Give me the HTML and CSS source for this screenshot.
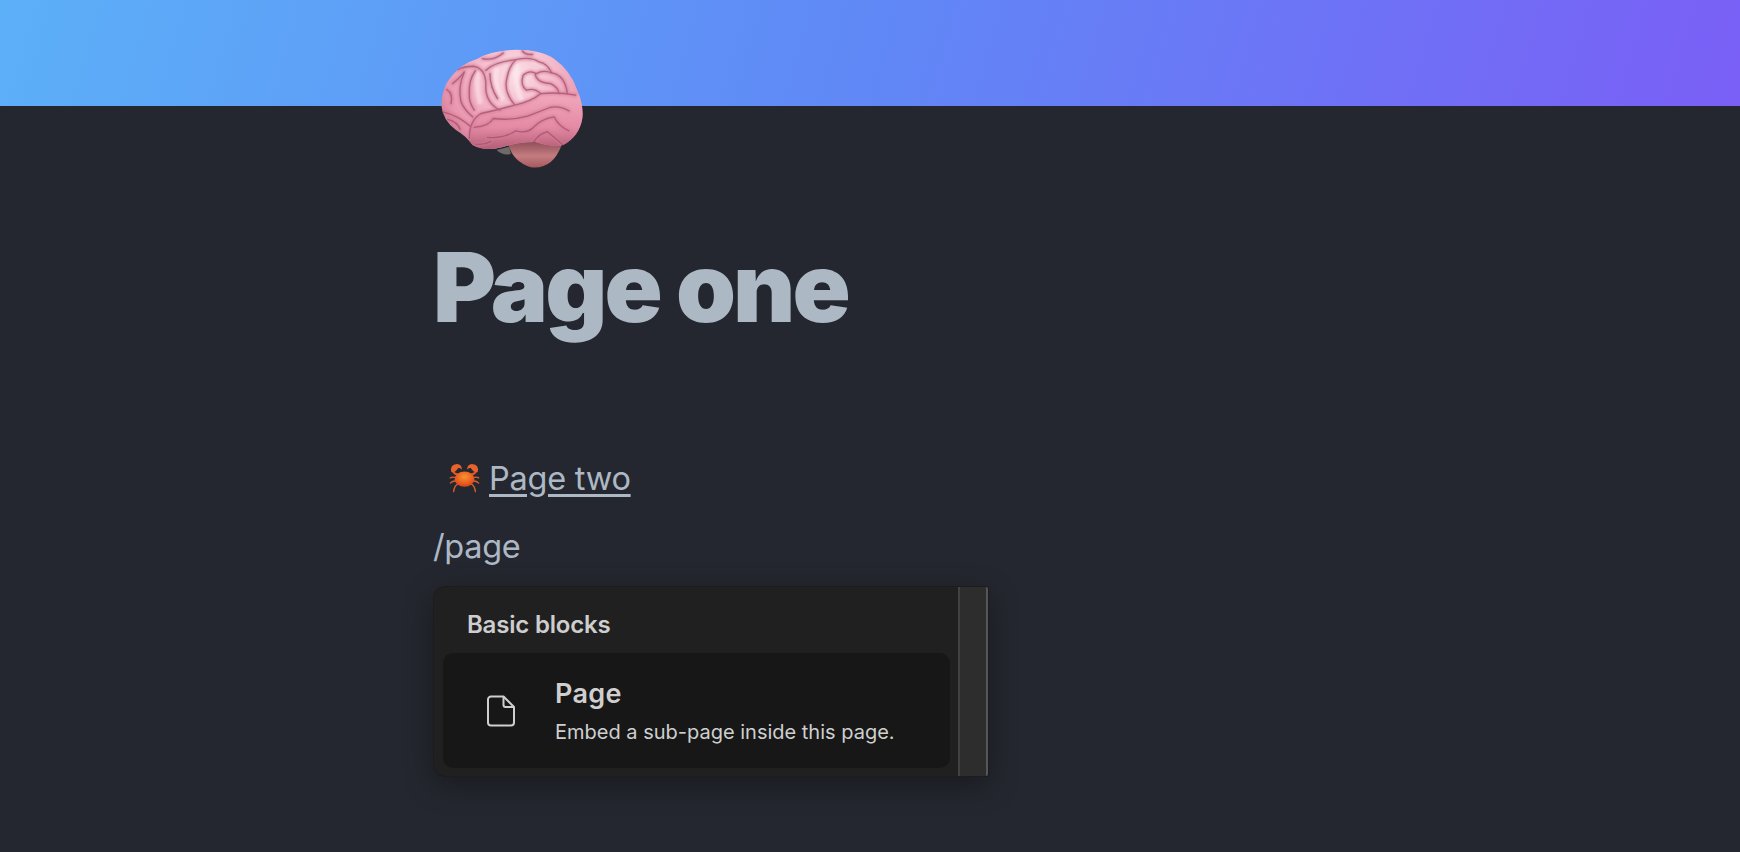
FILE: index.html
```html
<!DOCTYPE html>
<html lang="en">
<head>
    <meta charset="UTF-8">
    <meta name="viewport" content="width=device-width, initial-scale=1.0">
    <title>Page one</title>
    <link rel="stylesheet" href="styles.css">
</head>
<body>

<!-- Cover -->
<header class="cover"></header>

<main class="page">
    <!-- Page icon hangs over the cover -->
    <div class="page-icon">
        <svg viewBox="60 50 440 370" width="147" height="123" aria-hidden="true">
            <defs>
                <radialGradient id="brainFill" gradientUnits="userSpaceOnUse" cx="290" cy="130" r="270">
                    <stop offset="0" stop-color="#fbdfe7"/>
                    <stop offset="0.4" stop-color="#f5bccd"/>
                    <stop offset="0.8" stop-color="#e995ae"/>
                    <stop offset="1" stop-color="#c8728c"/>
                </radialGradient>
                <linearGradient id="lobeFill" gradientUnits="userSpaceOnUse" x1="300" y1="190" x2="300" y2="360">
                    <stop offset="0" stop-color="#f1a8bd"/>
                    <stop offset="0.6" stop-color="#e48aa4"/>
                    <stop offset="1" stop-color="#b25b75"/>
                </linearGradient>
                <linearGradient id="stemFill" x1="0" y1="0" x2="0" y2="1">
                    <stop offset="0" stop-color="#8f4f58"/>
                    <stop offset="0.55" stop-color="#c47c80"/>
                    <stop offset="1" stop-color="#a5595f"/>
                </linearGradient>
                <filter id="soft" x="-10%" y="-10%" width="120%" height="120%"><feGaussianBlur stdDeviation="3.500"/></filter>
                <filter id="softer" x="-10%" y="-10%" width="120%" height="120%"><feGaussianBlur stdDeviation="1.800"/></filter>
                <clipPath id="brainClip">
                    <path d="M66 225 Q68 170 95 140 Q125 100 175 85 Q215 62 290 58 Q365 58 405 85 Q455 120 475 180 Q495 230 490 265 Q480 320 432 345 Q395 352 350 336 Q300 335 245 352 Q195 365 160 345 Q140 318 110 300 Q70 270 66 225 Z"/>
                </clipPath>
                <g id="brainFolds">
                    <path d="M150 325 Q150 270 185 250 Q235 240 285 225 Q335 215 365 190 Q420 185 470 195"/>
                    <path d="M115 118 Q135 108 165 108 Q198 115 200 160 Q195 215 242 240"/>
                    <path d="M168 122 Q148 150 150 190 Q148 215 165 240 M100 160 Q125 140 135 125 Q115 170 125 215 Q135 240 160 260"/>
                    <path d="M200 120 Q225 95 290 88 Q268 110 262 150 Q255 185 285 222"/>
                    <path d="M212 130 Q212 170 235 205"/>
                    <path d="M290 88 Q335 78 360 95 Q385 100 398 128 Q372 118 352 130 Q330 118 312 135 Q302 165 322 180 Q345 172 365 190"/>
                    <path d="M348 130 Q352 158 395 160 Q418 172 420 190"/>
                    <path d="M398 128 Q438 135 445 190"/>
                    <path d="M190 85 Q225 92 252 68 M310 62 Q320 75 340 72"/>
                    <path d="M82 178 Q102 190 95 220 M70 245 Q115 255 152 288"/>
                    <path d="M85 268 Q115 275 122 298"/>
                    <path d="M165 292 Q210 288 222 265 Q275 272 325 258 Q360 245 392 232 Q420 225 450 242"/>
                    <path d="M205 322 Q255 326 290 302 Q325 312 345 290 Q370 265 405 260 Q420 290 450 302"/>
                    <path d="M340 340 Q360 310 385 305 Q410 325 432 345"/>
                    <path d="M170 342 Q195 346 215 334"/>
                </g>
            </defs>
            <path fill="#6d6a68" d="M232 360 Q250 378 275 372 L270 350 Z"/>
            <path fill="url(#stemFill)" d="M268 345 Q282 395 335 412 Q400 420 428 345 Q350 325 268 345 Z"/>
            <path fill="url(#brainFill)" d="M66 225 Q68 170 95 140 Q125 100 175 85 Q215 62 290 58 Q365 58 405 85 Q455 120 475 180 Q495 230 490 265 Q480 320 432 345 Q395 352 350 336 Q300 335 245 352 Q195 365 160 345 Q140 318 110 300 Q70 270 66 225 Z"/>
            <g clip-path="url(#brainClip)">
                <path fill="url(#lobeFill)" d="M150 325 Q150 270 185 250 Q235 240 285 225 Q335 215 365 190 Q420 185 500 195 L500 370 L140 370 Z"/>
                <!-- pale tops of the folds -->
                <g fill="none" stroke="#fdeef3" stroke-width="16" stroke-linecap="round" opacity="0.5" filter="url(#soft)">
                    <path d="M232 118 Q222 160 248 205"/>
                    <path d="M295 110 Q282 150 305 205"/>
                    <path d="M345 92 Q375 105 385 110"/>
                    <path d="M175 130 Q170 170 182 215"/>
                </g>
                <use href="#brainFolds" fill="none" stroke="#cf7a95" stroke-width="12" stroke-linecap="round" stroke-linejoin="round" opacity="0.6" filter="url(#soft)"/>
                <use href="#brainFolds" fill="none" stroke="#a54d69" stroke-width="4" stroke-linecap="round" stroke-linejoin="round" opacity="0.7" filter="url(#softer)"/>
            </g>
        </svg>
    </div>

    <h1 class="page-title">Page one</h1>

    <a class="page-link" href="#">
        <svg class="crab" viewBox="85 62 100 100" width="33" height="33" aria-hidden="true">
            <defs>
                <radialGradient id="crabFill" cx="0.5" cy="0.35" r="0.7">
                    <stop offset="0" stop-color="#f8922e"/>
                    <stop offset="0.65" stop-color="#e8591f"/>
                    <stop offset="1" stop-color="#c93f1a"/>
                </radialGradient>
            </defs>
            <g fill="none" stroke="#d9602e" stroke-width="4" stroke-linecap="round">
                <path d="M112 110 Q98 106 92 110"/>
                <path d="M110 120 Q100 118 92 126"/>
                <path d="M114 129 Q104 134 102 152"/>
                <path d="M158 110 Q172 106 178 110"/>
                <path d="M160 120 Q170 118 178 126"/>
                <path d="M156 129 Q166 134 168 152"/>
            </g>
            <g fill="none" stroke="#e0592a" stroke-width="6" stroke-linecap="round">
                <path d="M116 100 Q99 98 100 84"/>
                <path d="M154 100 Q171 98 170 84"/>
            </g>
            <path fill="#e8622c" d="M95 92 Q90 70 112 68 Q128 70 127 85 Q116 76 113 85 Q106 95 95 92 Z"/>
            <path fill="#e8622c" d="M175 92 Q180 70 158 68 Q142 70 143 85 Q154 76 157 85 Q164 95 175 92 Z"/>
            <ellipse cx="135" cy="114" rx="30" ry="23" fill="url(#crabFill)"/>
        </svg>
        <span class="page-link-text">Page two</span>
    </a>

    <p class="slash-line">/page</p>

    <!-- Slash command menu -->
    <div class="slash-menu">
        <div class="slash-list">
            <div class="slash-heading">Basic blocks</div>
            <div class="slash-item">
                <span class="slash-icon">
                    <svg viewBox="0 0 28 32" width="28" height="32" fill="none" stroke="currentColor" stroke-width="2" stroke-linejoin="round" aria-hidden="true">
                        <path d="M4 1.500h12.500L27 12v15.500a3 3 0 0 1-3 3H4a3 3 0 0 1-3-3v-23a3 3 0 0 1 3-3Z"/>
                        <path d="M16.500 1.500V10a2 2 0 0 0 2 2H27"/>
                    </svg>
                </span>
                <div class="slash-text">
                    <div class="slash-name">Page</div>
                    <div class="slash-desc">Embed a sub-page inside this page.</div>
                </div>
            </div>
        </div>
        <div class="slash-scroll"></div>
    </div>
</main>

</body>
</html>
```

FILE: styles.css
```css
html, body {
    margin: 0;
    padding: 0;
    height: 100%;
}

body {
    background-color: #24272f;
    font-family: Inter, 'Noto Sans', sans-serif;
    color: #adb8c5;
    overflow: hidden;
}

.cover {
    height: 106px;
    background: linear-gradient(106deg, #5cb0f8 0%, #6088f6 50%, #7a5ff6 100%);
}

.page {
    padding-left: 434px;
    width: 560px;
}

/* icon */
.page-icon {
    margin: -59px 0 0 5px;
    height: 123px;
}

.page-icon svg {
    display: block;
}

.page-title {
    margin: 59px 0 0 -1px;
    font-size: 96px;
    line-height: 116px;
    font-weight: 900;
    letter-spacing: -2.9px;
    color: #adb8c5;
}

.page-link {
    display: flex;
    align-items: center;
    gap: 8px;
    margin: 110px 0 0 14px;
    height: 46px;
    color: #adb8c5;
    text-decoration: none;
}

.page-link-text {
    font-size: 32.5px;
    font-weight: 400;
    letter-spacing: -0.25px;
    text-decoration: underline;
    text-decoration-thickness: 3px;
    text-underline-offset: 4px;
}

.slash-line {
    margin: 23px 0 0 -1px;
    font-size: 32.5px;
    font-weight: 400;
    letter-spacing: -0.35px;
    line-height: 46px;
}

/* menu */
.slash-menu {
    display: flex;
    width: 554px;
    height: 189px;
    margin-top: 17px;
    background-color: #202020;
    border-radius: 12px 2px 2px 12px;
    box-shadow: 0 0 0 1px #1c1c1c, 0 8px 30px rgba(0, 0, 0, 0.35);
    overflow: hidden;
}

.slash-list {
    flex: 1;
    padding: 0 8px 0 9px;
}

.slash-heading {
    padding: 24px 0 0 24px;
    height: 42px;
    font-size: 24px;
    line-height: 28px;
    font-weight: 600;
    letter-spacing: -0.2px;
    color: #cecece;
}

.slash-item {
    display: flex;
    align-items: center;
    height: 115px;
    background-color: #171717;
    border-radius: 10px;
    color: #cfcfcf;
}

.slash-icon {
    display: flex;
    width: 112px;
    padding-left: 4px;
    box-sizing: border-box;
    justify-content: center;
}

.slash-text {
    padding-top: 2px;
}

.slash-name {
    font-size: 27px;
    line-height: 34px;
    font-weight: 600;
    letter-spacing: 0.3px;
}

.slash-desc {
    margin-top: 7px;
    font-size: 20px;
    line-height: 28px;
    font-weight: 400;
}

.slash-scroll {
    box-sizing: border-box;
    width: 30px;
    background-color: #2d2d2d;
    border-left: 2px solid #424242;
    border-right: 2px solid #565656;
}
```
